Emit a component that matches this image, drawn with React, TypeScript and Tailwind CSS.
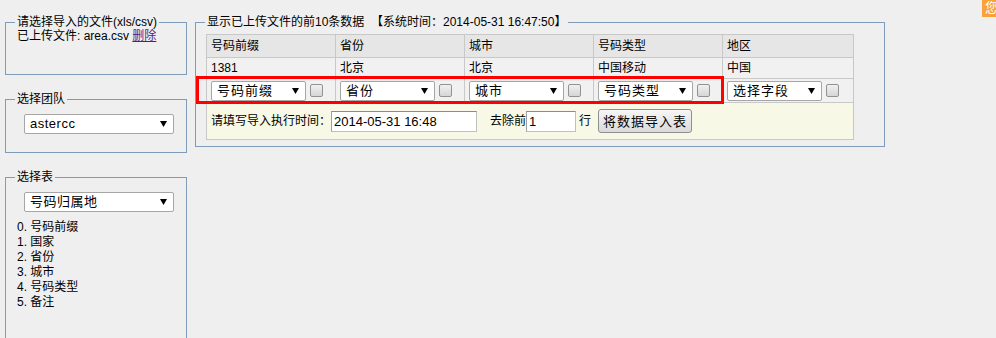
import React from "react";

function Arrow() {
  return (
    <svg width="7" height="6" viewBox="0 0 7 6" className="shrink-0">
      <polygon points="0,0 7,0 3.5,6" fill="#000" />
    </svg>
  );
}

function Sel({ label, wide }: { label: string; wide?: boolean }) {
  return (
    <div
      className={
        wide
          ? "flex items-center justify-between w-[150px] h-[20px] bg-white border border-[#a6a6a6] rounded-[2px] pl-[5px] pr-[6px] text-[13px] leading-[16px] tracking-[0.5px]"
          : "flex items-center justify-between w-[95px] h-[20px] bg-white border border-[#a6a6a6] rounded-[2px] pl-[5px] pr-[6px] text-[13px] leading-[16px] tracking-[1px]"
      }
    >
      <span>{label}</span>
      <Arrow />
    </div>
  );
}

function Check() {
  return (
    <div className="w-[13px] h-[13px] rounded-[2px] border border-[#929292] bg-gradient-to-b from-[#f0f0f0] to-[#d6d6d6]" />
  );
}

function SelCell({ label }: { label: string }) {
  return (
    <td className="border border-[#c8c8c8] px-[4px] align-middle">
      <div className="flex items-center gap-[4px]">
        <Sel label={label} />
        <Check />
      </div>
    </td>
  );
}

export default function App() {
  const cell = "border border-[#c8c8c8] px-[4px] align-middle text-left font-normal";
  return (
    <div className="relative w-[996px] h-[338px] overflow-hidden bg-[#efefef] font-['Liberation_Sans','Noto_Sans_CJK_SC',sans-serif] text-[12px] leading-[15px] text-black">
      <div className="flex items-start pl-[5px] pt-[15px] gap-[8px]">
        {/* left column */}
        <div className="flex flex-col w-[182px] shrink-0">
          <fieldset className="h-[60px] border border-[#7f9db9] px-[9px]">
            <legend className="px-[2px] leading-[14px]">请选择导入的文件(xls/csv)</legend>
            <div className="pl-[2px]">
              已上传文件: area.csv <a className="text-[#551a8b] underline">删除</a>
            </div>
          </fieldset>

          <fieldset className="mt-[17px] h-[61px] border border-[#7f9db9] px-[9px]">
            <legend className="px-[2px] leading-[14px]">选择团队</legend>
            <div className="mt-[8px] ml-[9px]">
              <Sel label="astercc" wide />
            </div>
          </fieldset>

          <fieldset className="mt-[17px] h-[200px] border border-[#7f9db9] px-[9px]">
            <legend className="px-[2px] leading-[14px]">选择表</legend>
            <div className="mt-[8px] ml-[9px]">
              <Sel label="号码归属地" wide />
            </div>
            <div className="mt-[8px] pl-[2px] flex flex-col">
              <div>0. 号码前缀</div>
              <div>1. 国家</div>
              <div>2. 省份</div>
              <div>3. 城市</div>
              <div>4. 号码类型</div>
              <div>5. 备注</div>
            </div>
          </fieldset>
        </div>

        {/* right fieldset */}
        <fieldset className="w-[690px] h-[132px] border border-[#7f9db9] pl-[9px] shrink-0">
          <legend className="px-[2px] leading-[14px] whitespace-pre">
            显示已上传文件的前10条数据  【系统时间：2014-05-31 16:47:50】
          </legend>
          <table className="mt-[5px] ml-[1px] w-[647px] table-fixed border-collapse">
            <colgroup>
              <col className="w-[129px]" />
              <col className="w-[129px]" />
              <col className="w-[129px]" />
              <col className="w-[129px]" />
              <col className="w-[131px]" />
            </colgroup>
            <tbody>
              <tr className="h-[23px] bg-[#e6e6e6]">
                <th className={cell}>号码前缀</th>
                <th className={cell}>省份</th>
                <th className={cell}>城市</th>
                <th className={cell}>号码类型</th>
                <th className={cell}>地区</th>
              </tr>
              <tr className="h-[21px] bg-[#f1f1f1]">
                <td className={cell}>1381</td>
                <td className={cell}>北京</td>
                <td className={cell}>北京</td>
                <td className={cell}>中国移动</td>
                <td className={cell}>中国</td>
              </tr>
              <tr className="h-[24px] bg-[#f1f1f1]">
                <SelCell label="号码前缀" />
                <SelCell label="省份" />
                <SelCell label="城市" />
                <SelCell label="号码类型" />
                <SelCell label="选择字段" />
              </tr>
              <tr className="h-[37px] bg-[#f8f8e6]">
                <td colSpan={5} className="border border-[#c8c8c8] px-[4px] align-middle">
                  <div className="flex items-center">
                    <span>请填写导入执行时间：</span>
                    <div className="w-[146px] h-[21px] bg-white border border-[#c0c0c0] border-t-[#8c8c8c] border-l-[#a0a0a0] pl-[2px] text-[13px] leading-[19px]">
                      2014-05-31 16:48
                    </div>
                    <span className="ml-[13px]">去除前</span>
                    <div className="w-[50px] h-[21px] bg-white border border-[#c0c0c0] border-t-[#8c8c8c] border-l-[#a0a0a0] pl-[2px] text-[13px] leading-[19px]">
                      1
                    </div>
                    <span className="ml-[3px]">行</span>
                    <div className="ml-[7px] w-[94px] h-[24px] flex items-center justify-center rounded-[3px] border border-[#8f8f8f] bg-gradient-to-b from-[#f6f6f6] to-[#dadada] text-[13px] tracking-[1px]">
                      将数据导入表
                    </div>
                  </div>
                </td>
              </tr>
            </tbody>
          </table>
        </fieldset>
      </div>

      {/* red highlight overlay */}
      <div className="absolute left-[196px] top-[76px] w-[528px] h-[28px] border-[3px] border-[#ff0000] pointer-events-none" />

      {/* orange tag top-right */}
      <div className="absolute right-0 top-0 w-[14px] h-[17px] overflow-hidden bg-[#f7a23b]">
        <span className="block pl-[3px] text-white text-[13px] leading-[16px]">您</span>
      </div>
    </div>
  );
}
